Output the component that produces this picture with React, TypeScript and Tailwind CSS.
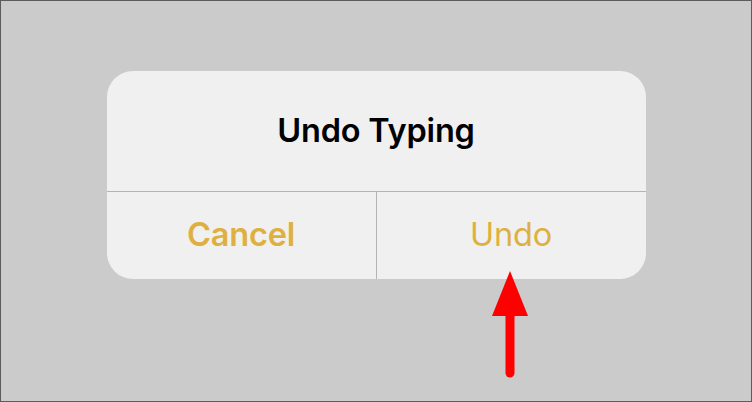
export default function App() {
  return (
    <div
      className="relative w-[752px] h-[402px] bg-[#cbcbcb] border border-[#5c5c5c] flex flex-col items-center pt-[70px]"
      style={{ fontFamily: "Inter, 'Liberation Sans', sans-serif" }}
    >
      <div className="w-[539px] h-[208px] bg-[#f0f0f0] rounded-[26px] flex flex-col overflow-hidden">
        <div className="h-[121px] flex items-center justify-center border-b border-[#b4b4b4]">
          <span className="text-[32.5px] font-semibold text-black tracking-[-0.2px] pt-[1px]">Undo Typing</span>
        </div>
        <div className="flex-1 flex">
          <div className="w-[270px] flex items-center justify-center border-r border-[#b4b4b4]">
            <span className="text-[32.5px] font-semibold text-[#deb041] tracking-[-0.2px]">Cancel</span>
          </div>
          <div className="flex-1 flex items-center justify-center">
            <span className="text-[32.5px] font-normal text-[#deb041] tracking-[-0.2px]">Undo</span>
          </div>
        </div>
      </div>
      <svg className="absolute left-[490px] top-[269px]" width="38" height="110" viewBox="0 0 38 110">
        <polygon points="19,1 37,46 1,46" fill="#ff0000" />
        <line x1="19" y1="40" x2="19" y2="103" stroke="#ff0000" strokeWidth="9" strokeLinecap="round" />
      </svg>
    </div>
  );
}
